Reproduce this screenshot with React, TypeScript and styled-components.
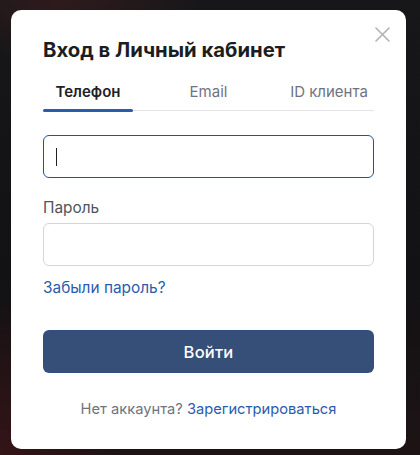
import { useState } from "react";
import styled, { createGlobalStyle } from "styled-components";

const GlobalStyle = createGlobalStyle`
  html, body {
    margin: 0;
    padding: 0;
    height: 100%;
  }
  body {
    font-family: Inter, "Noto Sans", sans-serif;
    background: #141417;
  }
  #root {
    min-height: 100%;
  }
`;

const Backdrop = styled.div`
  width: 420px;
  height: 455px;
  box-sizing: border-box;
  padding: 10px 14px 6px 11px;
  background:
    radial-gradient(ellipse 120px 160px at 0px 455px, rgba(70, 20, 24, 0.55), transparent),
    radial-gradient(ellipse 140px 60px at 60px 0px, rgba(70, 30, 34, 0.5), transparent),
    linear-gradient(180deg, #171719 0%, #121214 60%, #1d1315 100%);
`;

const Card = styled.div`
  position: relative;
  width: 395px;
  height: 439px;
  box-sizing: border-box;
  padding: 26px 32px 0 32px;
  background: #ffffff;
  border-radius: 10px;
  display: flex;
  flex-direction: column;
`;

const CloseButton = styled.button`
  position: absolute;
  top: 12px;
  right: 12px;
  width: 24px;
  height: 24px;
  padding: 0;
  border: none;
  background: transparent;
  display: flex;
  align-items: center;
  justify-content: center;
  cursor: pointer;
`;

const Title = styled.h2`
  margin: 0;
  font-size: 20.3px;
  line-height: 28px;
  font-weight: 700;
  color: #1c1d21;
`;

const Tabs = styled.div`
  margin-top: 18px;
  display: grid;
  grid-template-columns: repeat(3, 90px);
  justify-content: space-between;
  border-bottom: 1px solid #e3e5e9;
`;

const Tab = styled.button<{ $active: boolean }>`
  position: relative;
  padding: 0 0 8px 0;
  border: none;
  background: transparent;
  font-family: inherit;
  font-size: 15px;
  line-height: 20px;
  text-align: center;
  white-space: nowrap;
  font-weight: ${(p) => (p.$active ? 600 : 400)};
  color: ${(p) => (p.$active ? "#1f2126" : "#6e747f")};
  cursor: pointer;

  &::after {
    content: "";
    position: absolute;
    left: 0;
    right: 0;
    bottom: -2px;
    height: 3px;
    border-radius: 2px;
    background: ${(p) => (p.$active ? "#2b5bad" : "transparent")};
  }
`;

const FieldBox = styled.div<{ $focused?: boolean }>`
  position: relative;
  margin-top: ${(p) => (p.$focused ? "24px" : "0")};

  &::after {
    content: "";
    display: ${(p) => (p.$focused ? "block" : "none")};
    position: absolute;
    left: 13px;
    top: 13px;
    width: 1px;
    height: 18px;
    background: #1f2126;
  }
`;

const Field = styled.input<{ $focused?: boolean }>`
  display: block;
  box-sizing: border-box;
  width: 100%;
  height: 43px;
  padding: 0 12px;
  border: 1px solid ${(p) => (p.$focused ? "#2a4f94" : "#d3d6dd")};
  border-radius: 6px;
  font-family: inherit;
  font-size: 15px;
  color: #1f2126;
  caret-color: transparent;
  outline: none;
  background: #fff;
`;

const Label = styled.label`
  margin-top: 20px;
  margin-bottom: 5px;
  font-size: 15.4px;
  line-height: 20px;
  color: #50545c;
`;

const Link = styled.a`
  color: #2b5bad;
  text-decoration: none;
  cursor: pointer;
`;

const ForgotLink = styled(Link)`
  margin-top: 12px;
  font-size: 15.4px;
  line-height: 20px;
  align-self: flex-start;
`;

const SubmitButton = styled.button`
  margin-top: 32px;
  height: 43px;
  width: 100%;
  border: none;
  border-radius: 6px;
  background: #364f78;
  color: #ffffff;
  font-family: inherit;
  font-size: 16.5px;
  font-weight: 500;
  letter-spacing: 0.2px;
  cursor: pointer;
`;

const Footer = styled.div`
  margin-top: 26px;
  text-align: center;
  font-size: 14.7px;
  line-height: 20px;
  color: #6e747f;
`;

const tabs = ["Телефон", "Email", "ID клиента"];

export default function App() {
  const [active, setActive] = useState(0);

  return (
    <>
      <GlobalStyle />
      <Backdrop>
        <Card>
          <CloseButton aria-label="Закрыть">
            <svg width="15" height="15" viewBox="0 0 15 15">
              <path
                d="M1 1 L14 14 M14 1 L1 14"
                stroke="#aeb2b9"
                strokeWidth="1.6"
                strokeLinecap="round"
              />
            </svg>
          </CloseButton>
          <Title>Вход в Личный кабинет</Title>
          <Tabs>
            {tabs.map((t, i) => (
              <Tab key={t} $active={i === active} onClick={() => setActive(i)}>
                {t}
              </Tab>
            ))}
          </Tabs>
          <FieldBox $focused>
            <Field $focused type="tel" />
          </FieldBox>
          <Label>Пароль</Label>
          <FieldBox>
            <Field type="password" />
          </FieldBox>
          <ForgotLink>Забыли пароль?</ForgotLink>
          <SubmitButton>Войти</SubmitButton>
          <Footer>
            Нет аккаунта? <Link>Зарегистрироваться</Link>
          </Footer>
        </Card>
      </Backdrop>
    </>
  );
}
